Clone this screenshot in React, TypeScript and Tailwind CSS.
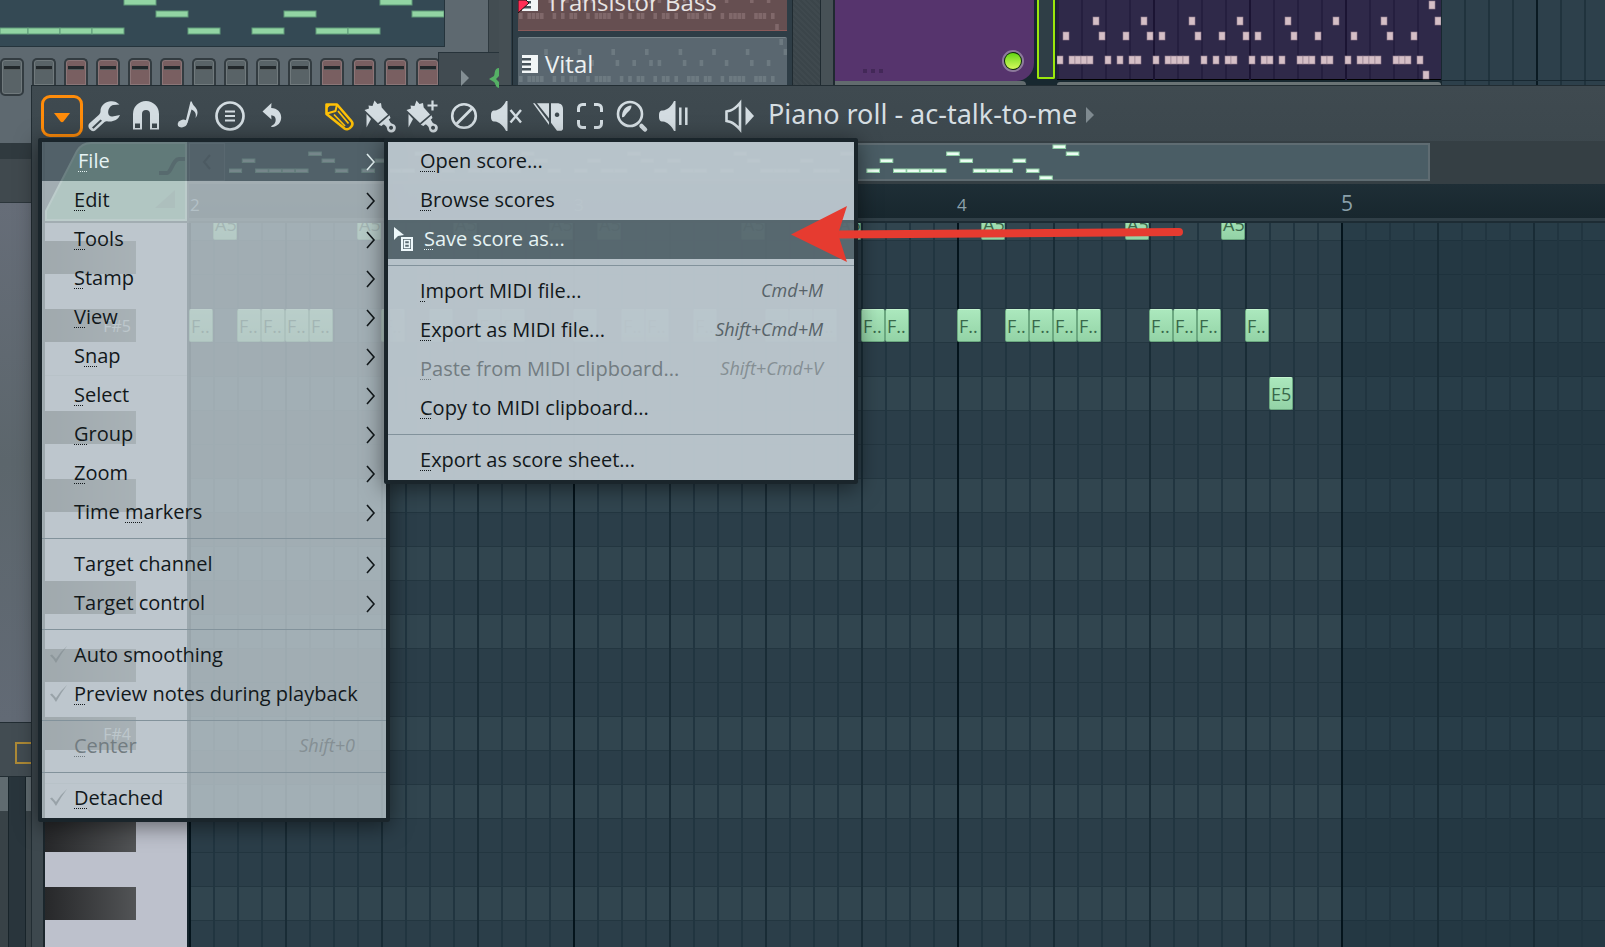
import React from "react";

type Entry = {
  label: string;
  mnemonic?: number;
  shortcut?: string;
  sub?: boolean;
  checked?: boolean;
  disabled?: boolean;
  active?: boolean;
  cursor?: boolean;
};

const mainGroups: Entry[][] = [
  [
    { label: "File", mnemonic: 0, sub: true, active: true },
    { label: "Edit", mnemonic: 0, sub: true },
    { label: "Tools", mnemonic: 0, sub: true },
    { label: "Stamp", mnemonic: 0, sub: true },
    { label: "View", mnemonic: 0, sub: true },
    { label: "Snap", mnemonic: 1, sub: true },
    { label: "Select", mnemonic: 0, sub: true },
    { label: "Group", mnemonic: 0, sub: true },
    { label: "Zoom", mnemonic: 0, sub: true },
    { label: "Time markers", mnemonic: 5, sub: true },
  ],
  [
    { label: "Target channel", sub: true },
    { label: "Target control", sub: true },
  ],
  [
    { label: "Auto smoothing", checked: true },
    { label: "Preview notes during playback", mnemonic: 0, checked: true },
  ],
  [{ label: "Center", mnemonic: 0, shortcut: "Shift+0", disabled: true }],
  [{ label: "Detached", mnemonic: 0, checked: true }],
];

const fileGroups: Entry[][] = [
  [
    { label: "Open score...", mnemonic: 0 },
    { label: "Browse scores", mnemonic: 0 },
    { label: "Save score as...", mnemonic: 0, active: true, cursor: true },
  ],
  [
    { label: "Import MIDI file...", mnemonic: 0, shortcut: "Cmd+M" },
    { label: "Export as MIDI file...", mnemonic: 0, shortcut: "Shift+Cmd+M" },
    { label: "Paste from MIDI clipboard...", mnemonic: 0, shortcut: "Shift+Cmd+V", disabled: true },
    { label: "Copy to MIDI clipboard...", mnemonic: 0 },
  ],
  [{ label: "Export as score sheet...", mnemonic: 0 }],
];

/* The melody, as sixteenth-note steps for each pitch line. */
const melody = {
  base: [0, 2, 3, 4, 5, 8, 10, 12, 13, 16, 18, 19, 20, 21, 24, 26, 28, 29, 32, 34, 35, 37, 40, 41, 42, 44, 45, 48, 50, 51, 52, 53, 56, 57, 58, 60],
  mid: [1, 7, 11, 15, 17, 23, 27, 31, 33, 39, 43, 49, 55, 59],
  high: [6, 14, 22, 30, 38, 46, 54, 63],
  top: [62],
  low: [61],
};

type Rows = { base: number; mid: number; high: number; top: number; low: number };

function Melody({ pitch, rows, w, h }: { pitch: number; rows: Rows; w: number; h: number }) {
  return (
    <>
      {(Object.keys(melody) as (keyof Rows)[]).map((k) =>
        melody[k].map((s) => <rect key={k + s} x={s * pitch} y={rows[k]} width={w} height={h} />)
      )}
    </>
  );
}

function Label({ text, mnemonic }: { text: string; mnemonic?: number }) {
  if (mnemonic === undefined) return <span>{text}</span>;
  return (
    <span>
      {text.slice(0, mnemonic)}
      <span className="underline decoration-dotted decoration-1 underline-offset-3 [text-decoration-skip-ink:none]">
        {text[mnemonic]}
      </span>
      {text.slice(mnemonic + 1)}
    </span>
  );
}

function MenuRow({ e, fill, activeFill }: { e: Entry; fill: string; activeFill: string }) {
  const tone = e.active ? `${activeFill} text-[#e6f3f4]` : e.disabled ? `${fill} text-[#727c81]` : `${fill} text-[#12181b]`;
  return (
    <button
      type="button"
      role={e.checked ? "menuitemcheckbox" : "menuitem"}
      aria-checked={e.checked}
      disabled={e.disabled}
      className={`flex h-[39px] w-full items-center pb-[2px] pr-[10px] text-left text-[20px] font-normal ${tone}`}
    >
      <span className={`flex shrink-0 items-center ${e.active ? "w-[36px]" : "w-[32px]"}`}>
        {e.checked && (
          <svg viewBox="0 0 18 18" className="ml-[8px] h-[18px] w-[18px]" fill="#808b90" opacity="0.600">
            <path d="M0 9.500l2-1 4 4.500Q11 5 17 0 11 8 6 17 3 12 0 9.500z" />
          </svg>
        )}
        {e.cursor && (
          <svg viewBox="0 0 22 26" className="ml-[5px] h-[26px] w-[22px]">
            <path d="M1 1l10 8-6 1-4 4z" fill="#eef8fb" />
            <path d="M9 12h10v12H9z" fill="none" stroke="#eef8fb" strokeWidth="2" />
            <path d="M11.500 14.500h5v7h-5zM11.500 18h5" fill="none" stroke="#eef8fb" strokeWidth="1.500" />
          </svg>
        )}
      </span>
      <Label text={e.label} mnemonic={e.mnemonic} />
      {e.shortcut && (
        <span className={`ml-auto pr-[21px] text-[18px] font-normal italic ${e.disabled ? "text-[#858f94]" : "text-[#576268]"}`}>
          {e.shortcut}
        </span>
      )}
      {e.sub && (
        <svg viewBox="0 0 10 18" className="ml-auto mt-[2px] h-[18px] w-[10px]" fill="none" stroke="currentColor" strokeWidth="1.600">
          <path d="M1 1l7 8-7 8" />
        </svg>
      )}
    </button>
  );
}

function Menu({ groups, label, className, fill, activeFill }: { groups: Entry[][]; label: string; className: string; fill: string; activeFill: string }) {
  return (
    <div
      role="menu"
      aria-label={label}
      className={`absolute rounded-[2px] border-4 border-[#1a252b] shadow-[0_4px_22px_rgba(0,0,0,0.5)] ${className}`}
    >
      {groups.map((g, i) => (
        <React.Fragment key={i}>
          {i > 0 && (
            <div role="separator" className={`flex h-[13px] items-center ${fill}`}>
              <div className="h-px w-full bg-[#82929b]" />
            </div>
          )}
          {g.map((e) => (
            <MenuRow key={e.label} e={e} fill={fill} activeFill={activeFill} />
          ))}
        </React.Fragment>
      ))}
    </div>
  );
}

function Tool({ name, children, color = "text-[#d3dce1]" }: { name: string; children: React.ReactNode; color?: string }) {
  return (
    <button type="button" aria-label={name} className={`h-[42px] w-[42px] shrink-0 ${color}`}>
      <svg viewBox="0 0 42 42" className="h-[42px] w-[42px]" fill="currentColor">
        {children}
      </svg>
    </button>
  );
}

function BrushShape() {
  return (
    <>
      <path d="M4.500 15L9 13.500 8.500 10.500l4 .5L14.500 5.500l3 3.500 3.500-1 .7 4.500 6.300 7L18 28z" />
      <path d="M18.700 29.700L29.500 20.300l1 2.700-9 8z" />
      <path d="M6.500 19l4.500 5-4.500 8.500z" />
      <path fillRule="evenodd" d="M22.500 29l6-5 2 3.500c.7 1 1.500 1 2.500 1.500a4.400 4.400 0 1 1-6 4.500c-.3-2-1.500-3.500-4.500-4.500zM31 30.800a2 2 0 1 0 .1 0z" />
    </>
  );
}

function Toolbar() {
  return (
    <header className="flex h-[55px] items-start pl-[9px] pt-[9px]">
      <button
        type="button"
        aria-label="Piano roll options"
        aria-haspopup="menu"
        className="flex h-[42px] w-[42px] shrink-0 items-center justify-center rounded-[9px] border-3 border-[#ff8c0a]"
      >
        <svg viewBox="0 0 16 10" className="mt-[3px] h-[10px] w-[16px]" fill="#ff8c0a">
          <path d="M0 0h16L9.500 8.500q-1.500 1.500-3 0z" />
        </svg>
      </button>
      <Tool name="Tools">
        <path
          fillRule="evenodd"
          d="M36.500 9.500C33.500 6.500 30 5.500 26 6.500c-5 1.200-8.500 5-8.500 9.500 0 1.500-.3 2.500-1.500 3.700L6.500 28.300c-1.500 1.500-1.500 4 0 5.700l2 1.800c1.300.8 2.800.5 4-.6l9-8.200c1-.8 2-.8 3.500-.6 5 .6 10-1.400 12-6.400l-7.500 1.500c-2.500.3-4-1-4.300-3.500-.3-3.500 1.800-7.500 5.300-8zM9 32.500l8.500-8 1.500 1.200-8.500 8z"
        />
      </Tool>
      <Tool name="Magnet">
        <path fillRule="evenodd" d="M8 34.500V19a13 13 0 0 1 26 0v15.500h-9V19a4 4 0 0 0-8 0v15.500zM10 28.500V33h5v-4.500zM27 28.500V33h5v-4.500z" />
      </Tool>
      <Tool name="Stamp">
        <ellipse cx="15.500" cy="28.500" rx="5" ry="3.700" transform="rotate(-25 15.500 28.500)" />
        <path d="M23.500 6.500h1.300c.8 4.500 5.700 6 5.700 11 0 2-.7 4-2 5.500 1-4 0-6.500-4-8.500L20.500 28l-2-1z" />
      </Tool>
      <Tool name="Menu">
        <circle cx="21" cy="21" r="13.500" fill="none" stroke="currentColor" strokeWidth="2.700" />
        <path d="M16 16.500h10M16 21h10M16 25.500h10" stroke="currentColor" strokeWidth="2" />
      </Tool>
      <Tool name="Undo">
        <path d="M11.500 16.500L20.500 8l-.3 5c6 .3 10 4 10 9.500 0 5-3.500 9-9 9.500-1 .1-1.500-.8-.5-1.300 2.500-1.200 4-3 4-5.700 0-3-1.500-4.500-4.500-4.700l.3 4.200z" />
      </Tool>
      <div className="w-[25px] shrink-0" />
      <Tool name="Draw" color="text-[#ffc107]">
        <g fill="none" stroke="currentColor" strokeWidth="2.600" strokeLinejoin="round">
          <path d="M8.500 9.500h10.500L33.300 26c1.500 1.700 1.200 4.200-.3 6s-4.500 3-6.500 1.500L8.500 19z" />
          <path d="M19 9.500l-1.500 6.500-8.500 2.500" strokeWidth="2" />
          <path d="M20 16l10.500 12.500M16 19.500L27 31" strokeWidth="1.800" />
        </g>
        <path d="M8 9l4.500 1L9 13.500z" />
      </Tool>
      <Tool name="Paint">
        <BrushShape />
      </Tool>
      <Tool name="Paint sequencer">
        <BrushShape />
        <path d="M30.500 5.500v10M25.500 10.500h10" stroke="currentColor" strokeWidth="2.200" />
      </Tool>
      <Tool name="Delete">
        <circle cx="20" cy="21" r="11.800" fill="none" stroke="currentColor" strokeWidth="2.600" />
        <path d="M12.500 29L28 13.500" stroke="currentColor" strokeWidth="2.800" />
      </Tool>
      <Tool name="Mute">
        <path d="M9 15.500c4-.5 8.500-4 11-9.500h1.500v30H20c-2.500-5.500-7-9-11-9.500-3.500 0-4-2-4-5.500s.5-5.500 4-5.500z" />
        <path d="M24.500 15l10.500 12.500M35 15L24.500 27.500" stroke="currentColor" strokeWidth="2.400" />
      </Tool>
      <Tool name="Slice">
        <path d="M9 8.300h12v15zM5 8.300h1.800L21 27v3z" />
        <path fillRule="evenodd" d="M23 8.300h6c4 0 6 2 6 6v20l-1.500 1.500H29l-6-8zM29 17.500a2.300 2.300 0 1 0 .1 0z" />
      </Tool>
      <Tool name="Select">
        <g fill="none" stroke="currentColor" strokeWidth="3">
          <path d="M8.500 17v-3.500a4 4 0 0 1 4-4H16M24 9.500h3.500a4 4 0 0 1 4 4V17M31.500 25v3.500a4 4 0 0 1-4 4H24M16 32.500h-3.500a4 4 0 0 1-4-4V25" />
        </g>
      </Tool>
      <Tool name="Zoom">
        <circle cx="18" cy="19" r="12" fill="none" stroke="currentColor" strokeWidth="2.600" />
        <path d="M10 22c0-7 3.500-11 9.500-11.500 0 4-3 6-4.500 7.500s-2.500 5-5 4z" />
        <path d="M29.500 31l3.500 3.500" stroke="currentColor" strokeWidth="4.500" strokeLinecap="round" />
      </Tool>
      <Tool name="Playback">
        <path d="M9 15.500c4-.5 8.500-4 11-9.500h1.500v30H20c-2.500-5.500-7-9-11-9.500-3.500 0-4-2-4-5.500s.5-5.500 4-5.500z" />
        <path d="M26.300 12.500v17.500M32.300 12.500v17.500" stroke="currentColor" strokeWidth="2.500" />
      </Tool>
      <div className="w-[23px] shrink-0" />
      <Tool name="Target channel">
        <path d="M7.500 16.500l4-1c3-1 6-3.500 9.500-7.500v26.500c-3.500-4-6.500-6.500-9.500-7.500l-4-1z" fill="none" stroke="currentColor" strokeWidth="2.600" />
        <path d="M26.500 11.500L35 21l-8.500 9.500z" />
      </Tool>
      <h1 className="ml-[7px] whitespace-nowrap font-['Noto_Sans','Open_Sans',sans-serif] text-[27px] leading-[37px] text-[#d6dee2]">
        Piano roll - ac-talk-to-me
      </h1>
      <svg viewBox="0 0 8 16" className="ml-[9px] mt-[12px] h-[16px] w-[8px]" fill="#7f8a90">
        <path d="M0 0l8 8-8 8z" />
      </svg>
    </header>
  );
}

const redPads = [2, 3, 4, 5, 10, 11, 12, 13];

function ChannelRack() {
  const notes = [
    [0, 28], [28, 28], [60, 28], [92, 28], [124, -1], [156, 11], [188, 28], [252, 28], [284, 11], [316, 28], [348, 28], [380, -1], [412, 11],
  ];
  return (
    <section className="relative flex w-[499px] shrink-0 flex-col bg-[#5e6970]">
      <div className="h-[47px] w-[445px] border-b border-r border-[#25343c] bg-[#344954]">
        <svg viewBox="0 0 444 46" className="h-[46px] w-[444px]">
          {notes.map(([x, y]) => (
            <rect key={x} x={x} y={y} width={x === 0 ? 28 : 32} height="6" fill="#92d4a3" stroke="#5f9a78" strokeWidth="1" />
          ))}
        </svg>
      </div>
      <div className="flex h-[38px] gap-[8px] pt-[11px]">
        {Array.from({ length: 14 }, (_, i) => (
          <div
            key={i}
            className={`relative z-10 w-[24px] shrink-0 rounded-[5px] border-2 border-[#333c41] pt-[6px] shadow-[inset_0_0_0_1px_rgba(255,255,255,0.14)] ${
              i === 0 ? "h-[38px]" : "h-[27px] rounded-b-none border-b-0"
            } ${redPads.includes(i) ? "bg-[#795f61]" : "bg-[#596367]"}`}
          >
            <div className="mx-[2px] h-[4px] border-b border-[#88908f]/50 bg-[#22282b]" />
          </div>
        ))}
      </div>
      <div className="absolute right-0 top-0 h-[52px] w-[11px] border-l border-[#2e393f] bg-[#434d52]" />
      <div className="absolute bottom-0 right-0 z-20 flex h-[33px] w-[61px] items-center border-l border-t border-[#27333a] bg-[#414b51] pl-[22px] pt-[18px]">
        <svg viewBox="0 0 38 20" className="h-[20px] w-[38px]">
          <path d="M0 2l8 8-8 8z" fill="#848f94" />
          <path d="M38 0c-5 0-4 6-5 8l-5 3 5 3c2 2 1 5 5 6v-6l-3-3 3-3z" fill="#55b065" />
        </svg>
      </div>
    </section>
  );
}

function PianoGlyph() {
  return (
    <svg viewBox="0 0 16 18" className="h-[18px] w-[16px] shrink-0">
      <path d="M0 0h16v18H0z" fill="#f2f6f7" />
      <path d="M0 3h9v2.500H0zM0 8h9v2.500H0zM0 13h9v2.500H0z" fill="#46525a" />
    </svg>
  );
}

function Picker() {
  return (
    <section className="flex w-[336px] shrink-0 border-l-[12px] border-[#454f54] bg-[#2e3d46]">
      <div className="ml-px w-px bg-[#1b262c]" />
      <div className="ml-[5px] flex w-[269px] flex-col gap-[6px]">
        <div className="relative h-[31px] overflow-hidden border-b border-[#8a5a5a] bg-[#664f51]">
          <svg viewBox="0 0 269 31" className="absolute inset-0 h-[31px] w-[269px]" fill="#8b7375" opacity="0.700">
            <g transform="translate(1 0)">
              <Melody pitch={4.2} rows={{ base: 13, mid: -3, high: -9, top: -20, low: 24 }} w={3.6} h={6} />
            </g>
          </svg>
          <div className="relative -mt-[14px] flex items-center gap-[8px] pl-[4px]">
            <PianoGlyph />
            <span className="text-[24px] font-medium leading-8 text-[#e8e4e4]">Transistor Bass</span>
          </div>
          <svg viewBox="0 0 12 14" className="absolute left-0 top-0 h-[14px] w-[12px]">
            <path d="M0 0h8l3 3-11 10z" fill="#ff2d55" stroke="#1c1416" />
          </svg>
        </div>
        <div className="relative h-[48px] overflow-hidden rounded-t-[2px] border-t border-[#77848a] bg-[#5b6870]">
          <svg viewBox="0 0 269 48" className="absolute inset-0 h-[48px] w-[269px]" fill="#7a878d" opacity="0.600">
            <g transform="translate(1 0)">
              <Melody pitch={4.2} rows={{ base: 38, mid: 22, high: 11, top: 1, low: 60 }} w={3.6} h={6} />
            </g>
          </svg>
          <div className="relative flex items-center gap-[7px] pl-[4px] pt-[10px]">
            <PianoGlyph />
            <span className="text-[24px] font-medium leading-8 text-[#eef2f3]">Vital</span>
          </div>
        </div>
      </div>
      <div className="ml-[5px] w-[29px] border-x border-[#1f2a30] bg-[repeating-linear-gradient(45deg,#3b454a_0_2px,#3f494e_2px_4px)]" />
      <div className="flex-1 border-r-2 border-[#1f2a30] bg-[#475156]" />
    </section>
  );
}

function Playlist() {
  return (
    <section className="flex min-w-0 flex-1 bg-[#182830]">
      <div className="flex w-[199px] shrink-0 flex-col bg-[#182830]">
        <div className="relative h-[81px] rounded-br-[18px] bg-[#56346d]">
          <div className="absolute bottom-[8px] left-[28px] flex gap-[4px]">
            <i className="h-[4px] w-[4px] bg-[#432858]" />
            <i className="h-[4px] w-[4px] bg-[#432858]" />
            <i className="h-[4px] w-[4px] bg-[#432858]" />
          </div>
          <div className="absolute bottom-[9px] right-[10px] h-[22px] w-[22px] rounded-full border-2 border-[#8d7a9c] bg-[#0d2a08] p-px">
            <div className="h-full w-full rounded-full bg-linear-to-b from-[#5fd60a] to-[#d4f95a]" />
          </div>
        </div>
        <div className="mr-[8px] flex-1 rounded-tr-[8px] bg-[#626b6e]" />
      </div>
      <div className="ml-[3px] h-[79px] w-[18px] shrink-0 rounded-b-[2px] border-2 border-t-0 border-[#9be80c] bg-[#2f3e46]" />
      <div className="ml-[2px] flex w-[384px] shrink-0 flex-col">
        <div className="h-[80px] border-b border-black bg-[#2f2949] bg-[repeating-linear-gradient(90deg,#251f3f_0_2px,transparent_2px_24px)]">
          <svg viewBox="0 0 384 80" className="h-[80px] w-[384px]">
            <g fill="#1b1433">
              <path d="M96 0h2v80h-2zM192 0h2v80h-2zM288 0h2v80h-2z" />
            </g>
            <g fill="#d5bfc6" stroke="#96808f" strokeWidth="0.600">
              <Melody pitch={6} rows={{ base: 56, mid: 32, high: 17, top: 1, low: 71 }} w={6} h={8} />
            </g>
          </svg>
        </div>
        <div className="mt-[2px] flex-1 rounded-t-[3px] bg-[#6a7375]" />
      </div>
      <div className="ml-px flex-1 bg-[#2d404b] bg-[linear-gradient(90deg,transparent_0_94px,#0a1a22_94px_96px,transparent_96px),repeating-linear-gradient(90deg,transparent_0_22px,#20333d_22px_24px)]">
        <div className="h-[81px] border-b border-[#182831]" />
      </div>
    </section>
  );
}

/* Pitch rows from A5 downward; lit rows belong to the highlighted scale. */
const pitchRows = ["A5", "G#5", "G5", "F#5", "F5", "E5", "D#5", "D5", "C#5", "C5", "B4", "A#4", "A4", "G#4", "G4", "F#4", "F4", "E4", "D#4", "D4", "C#4", "C4", "B3", "A#3"];
const inScale = (p: string) => ["A", "B", "C#", "E", "F#"].includes(p.slice(0, -1));

const rollNotes = [
  ...melody.mid.filter((s) => s >= 16).map((s) => ({ s, row: 0, text: "A5" })),
  ...melody.base.filter((s) => s >= 16).map((s) => ({ s, row: 3, text: "F.." })),
  { s: 61, row: 5, text: "E5" },
];

function Keys() {
  return (
    <div className="w-[144px] shrink-0 overflow-hidden border-r-2 border-[#14232b] bg-[#bdc1cc]">
      <div className="-mt-[17px]">
        {pitchRows.map((p) => (
          <div key={p} className={`h-[34px] pt-px ${p.startsWith("F") && !p.includes("#") ? "border-b border-[#a5a9b5]" : ""}`}>
            {p.includes("#") && (
              <div className="flex h-[33px] w-[91px] items-center justify-end bg-linear-to-r from-[#27282a] to-[#525456] pr-[5px] text-[16px] text-[#bfc3ca]">
                {p.startsWith("F") && p}
              </div>
            )}
          </div>
        ))}
      </div>
    </div>
  );
}

function Roll() {
  return (
    <div className="relative min-w-0 flex-1 overflow-hidden">
      <div className="-mt-[16px]">
        {pitchRows.map((p) => (
          <div key={p} className={`h-[34px] border-b border-[#233640] ${inScale(p) ? "bg-[#31454f]" : "bg-[#2b3e49]"}`} />
        ))}
      </div>
      <div className="absolute inset-y-0 left-[1153px] right-0 bg-[#0f2733]/25" />
      <div className="absolute inset-0 bg-[repeating-linear-gradient(90deg,#04141c_0_2px,transparent_2px_384px),repeating-linear-gradient(90deg,#192c36_0_2px,transparent_2px_96px),repeating-linear-gradient(90deg,#213540_0_2px,transparent_2px_24px)]" />
      {rollNotes.map((n) => (
        <div
          key={n.text + n.s}
          className="absolute flex h-[33px] w-[24px] items-center overflow-hidden whitespace-nowrap rounded-[2px] border border-[#6ba880] border-t-[#c4f5d0] bg-linear-to-b from-[#abe8bd] to-[#93d3a6] pl-px pt-px text-[18px] text-[#39684a]"
          style={{ left: (n.s - 16) * 24, top: n.row * 34 - 16 }}
        >
          {n.text}
        </div>
      ))}
    </div>
  );
}

function PianoRoll() {
  return (
    <main className="relative flex min-w-0 flex-1 flex-col border-l border-t border-[#222d33] bg-linear-to-b from-[#3f4a50] to-[#3b464c] to-10%">
      <Toolbar />
      <div className="flex min-h-0 flex-1">
        <div className="w-[11px] shrink-0 bg-[#3d484e]" />
        <div className="flex min-w-0 flex-1 flex-col border-l-2 border-[#1b262c]">
          <div className="flex shrink-0">
            <svg viewBox="0 0 144 82" className="h-[82px] w-[144px] shrink-0 bg-[#333d43]">
              <path d="M1 79V70L32 10Q37 2 46 2h95v77z" fill="#7ebd93" stroke="#b8dfc3" strokeWidth="2" />
              <path d="M114 32h8c4 0 6-14 12-14h6" fill="none" stroke="#4c6a59" strokeWidth="4" />
              <path d="M110 67l20-18v18z" fill="#6c9a7c" />
            </svg>
            <div className="flex min-w-0 flex-1 flex-col">
              <div className="flex h-[43px] bg-[#353f44] pb-[3px] pt-[2px]">
                <button type="button" aria-label="Scroll left" className="flex w-[36px] items-center justify-center border border-[#566168] text-[#11181c]">
                  <svg viewBox="0 0 10 16" className="h-[16px] w-[10px]" fill="none" stroke="currentColor" strokeWidth="2">
                    <path d="M8 1L2 8l6 7" />
                  </svg>
                </button>
                <div className="relative mr-[175px] min-w-0 flex-1 bg-[#2c3a41]">
                  <div className="absolute inset-y-0 left-[215px] right-0 border-2 border-[#5f6c72] bg-[#4a5d65]" />
                  <svg viewBox="0 0 852 38" className="absolute left-[4px] top-0 h-[38px] w-[852px]" fill="#ecfdf3" stroke="#8fcfa5" strokeWidth="1">
                    <Melody pitch={13.29} rows={{ base: 26, mid: 16, high: 9, top: 2, low: 33 }} w={12.6} h={3.5} />
                  </svg>
                </div>
              </div>
              <div className="relative h-[34px] bg-linear-to-b from-[#1e2e36] to-[#18272e] text-[17px] text-[#8ba0aa]">
                <span className="absolute left-px top-[8px]">2</span>
                <span className="absolute left-[385px] top-[8px]">3</span>
                <span className="absolute left-[768px] top-[8px]">4</span>
                <span className="absolute left-[1152px] top-[4px] text-[21px]">5</span>
              </div>
              <div className="h-[5px] border-b-2 border-[#1d2c34] bg-[#303f47]" />
            </div>
          </div>
          <div className="flex min-h-0 flex-1">
            <Keys />
            <Roll />
          </div>
        </div>
      </div>
    </main>
  );
}

function SideWindows() {
  return (
    <aside className="flex w-[31px] shrink-0 flex-col bg-[#5e6970]">
      <div className="h-[58px] shrink-0" />
      <div className="h-[16px] shrink-0 bg-[#303a3f]" />
      <div className="h-[44px] shrink-0 border-b border-[#2c363b] bg-[#40494e]" />
      <div className="h-[519px] shrink-0 bg-linear-to-b from-[#666d78] via-[#5c666c] to-[#626a75]" />
      <div className="h-[55px] shrink-0 overflow-hidden border-y border-[#222d33] bg-[#424c52] pl-[15px] pt-[19px]">
        <div className="h-[22px] w-[22px] border-2 border-[#ad8a37]" />
      </div>
      <div className="flex flex-1 bg-linear-to-b from-[#606b70] from-[34px] to-[#384247] to-[34px]">
        <div className="ml-[8px] w-[18px] border-x border-[#18242a] bg-[#29353c]" />
      </div>
    </aside>
  );
}

export default function App() {
  return (
    <div className="relative flex h-screen flex-col overflow-hidden bg-[#2e3d46] font-['Open_Sans','Noto_Sans',sans-serif]">
      <div className="z-10 flex h-[85px] shrink-0">
        <ChannelRack />
        <Picker />
        <Playlist />
      </div>
      <div className="flex min-h-0 flex-1">
        <SideWindows />
        <PianoRoll />
      </div>
      <Menu
        groups={mainGroups}
        label="Piano roll options"
        className="left-[38px] top-[138px] z-20 w-[352px]"
        fill="bg-[#bdc7cd]/81"
        activeFill="bg-[#5a6a73]/81"
      />
      <Menu
        groups={fileGroups}
        label="File"
        className="left-[384px] top-[138px] z-30 w-[474px]"
        fill="bg-[#bac5cc]/98"
        activeFill="bg-[#596971]/97"
      />
      <svg viewBox="0 0 400 60" className="pointer-events-none absolute left-[788px] top-[204px] z-40 h-[60px] w-[400px]">
        <path d="M48 30.500L391 28" stroke="#e63b30" strokeWidth="8" strokeLinecap="round" />
        <path d="M3 30.500L59 2 50 30l9 28z" fill="#e63b30" />
      </svg>
    </div>
  );
}
